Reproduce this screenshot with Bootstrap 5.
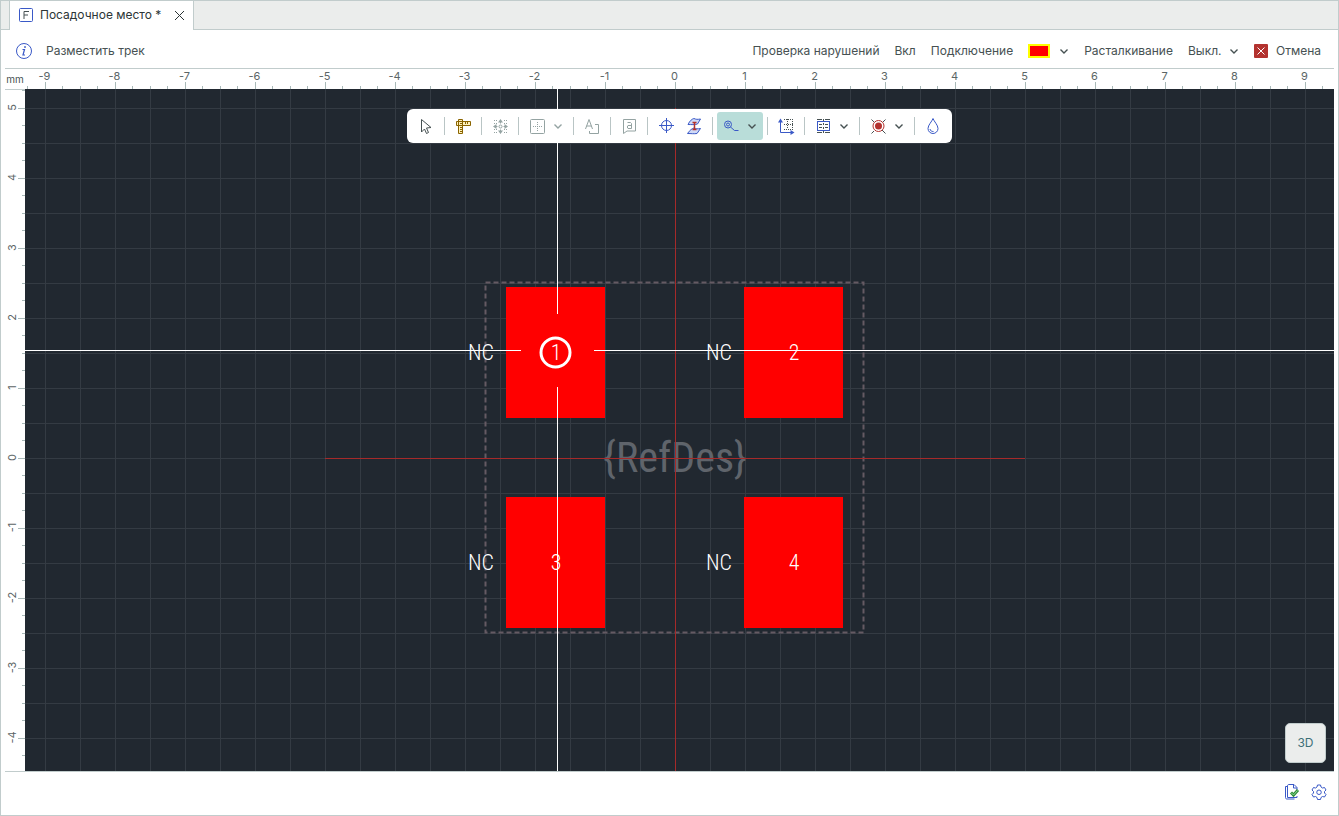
<!DOCTYPE html>
<html lang="ru">
<head>
<meta charset="utf-8">
<meta name="viewport" content="width=device-width, initial-scale=1">
<title>Посадочное место</title>
<link href="https://cdn.jsdelivr.net/npm/bootstrap@5.3.0/dist/css/bootstrap.min.css" rel="stylesheet">
<style>
  :root { --line: #c1cccc; --ink: #465152; --blue: #3a59c7; --board: #212830; }
  body { font: 12px/20px Inter, sans-serif; color: var(--ink); }
  button, select { font: inherit; color: inherit; background: none; border: 0; padding: 0; }
  svg { display: block; flex: none; }
  .window { height: 100vh; border: 1px solid var(--line); background: #fff; }
  .tabs { height: 29px; padding-left: 8px; background: #ebedec; box-shadow: inset 0 -1px var(--line); }
  .doc-tab { background: #fff; border: 1px solid var(--line); border-width: 0 1px; padding: 0 6px 2px 8px; gap: 6px; color: #2c3536; }
  .doc-title { width: 122px; margin-right: 3px; }
  .work { margin: 0 4px; }
  .options { height: 39px; padding: 3px 13px 0 10px; gap: 13px; border-bottom: 1px solid var(--line); }
  .options .state { gap: 15px; }
  .swatch { width: 22px; height: 14px; background: red; border: 2px solid #ff0; }
  .picker { gap: 9px; }
  .mode { appearance: none; width: 51px; background: url("data:image/svg+xml,%3Csvg xmlns='http://www.w3.org/2000/svg' width='10' height='10' fill='none' stroke='%23465152' stroke-width='1.4'%3E%3Cpath d='M1.5 3.5 5 7l3.500-3.500'/%3E%3C/svg%3E") no-repeat right center; }
  .editor { display: grid; grid-template: 20px minmax(0, 1fr) / 20px minmax(0, 1fr); }
  .unit { font-size: 10px; border-bottom: 1px solid var(--line); margin-bottom: -1px; z-index: 1; }
  .ruler { width: 100%; height: 100%; font-size: 11px; fill: #5b6566; stroke: none; }
  .ruler line { stroke: #a9b9b8; }
  .board { background: var(--board); }
  .board > svg { position: absolute; inset: 0; width: 100%; height: 100%; }
  .cad { font-family: "Roboto Condensed", "Liberation Sans Narrow", Roboto, sans-serif; font-weight: 300; font-size: 22px; fill: #fff; text-anchor: middle; }
  .refdes { font-size: 42px; font-weight: 400; fill: #5f646b; }
  .tools { top: 20px; left: 0; right: 0; width: fit-content; margin: 0 auto; height: 34px; padding: 0 5px; background: #fff; border-radius: 6px; }
  .tools button { height: 28px; width: 28px; padding-left: 4px; border-radius: 3px; display: flex; align-items: center; gap: 6px; }
  .tools button.wide { width: 46px; }
  .tools button.on { background: #b9ddd9; }
  .tools button:disabled { color: #94a3a2; }
  .tools .sep { width: 1px; height: 18px; margin: 0 4px; background: #b9c5c5; }
  .view3d { right: 8px; bottom: 8px; width: 41px; height: 40px; background: #ebedec; border: 1px solid var(--line); border-radius: 5px; color: #3c7078; }
  .status { height: 44px; border-top: 1px solid var(--line); padding: 0 5px 4px; gap: 8px; }
  .ico { fill: none; stroke: currentColor; }
  .blue { color: var(--blue); }
</style>
</head>
<body>
<svg width="0" height="0" class="position-absolute" aria-hidden="true">
  <symbol id="chev" viewBox="0 0 10 10"><path d="M1.500 3.500 5 7l3.500-3.500" fill="none" stroke="currentColor" stroke-width="1.400"/></symbol>
</svg>
<div class="window d-flex flex-column overflow-hidden">
  <nav class="tabs d-flex align-items-stretch" aria-label="Документы">
    <div class="doc-tab d-flex align-items-center">
      <svg class="ico blue" width="16" height="16"><rect x="1.500" y="1.500" width="13" height="13" rx="1"/><path d="M6 12V4.500h5M6 8h4" stroke="#465152"/></svg>
      <a href="#" class="doc-title text-reset text-decoration-none text-nowrap">Посадочное место *</a>
      <button type="button" aria-label="Закрыть"><svg class="ico" width="16" height="16"><path d="m4 4 9 9m0-9-9 9"/></svg></button>
    </div>
  </nav>
  <main class="work d-flex flex-column flex-grow-1">
    <header class="options d-flex align-items-center">
      <svg class="ico blue" width="18" height="18"><circle cx="9" cy="9" r="7.500"/><path d="M7.500 7.500h2l-1.500 5.500h2" stroke-width="1.200"/><circle cx="10" cy="5" r=".5" fill="currentColor"/></svg>
      <span class="text-nowrap">Разместить трек</span>
      <div class="state d-flex align-items-center ms-auto text-nowrap">
        <span>Проверка нарушений</span>
        <button type="button">Вкл</button>
        <span>Подключение</span>
        <button type="button" class="picker d-flex align-items-center" aria-label="Цвет слоя"><span class="swatch"></span><svg width="10" height="10"><use href="#chev"/></svg></button>
        <label for="mode">Расталкивание</label>
        <select id="mode" class="mode"><option>Выкл.</option><option>Вкл.</option></select>
        <button type="button" class="d-flex align-items-center gap-2"><svg width="14" height="14"><rect width="14" height="14" rx="1" fill="#b3322f"/><path d="m3.500 3.500 7 7m0-7-7 7" stroke="#fff"/></svg>Отмена</button>
      </div>
    </header>
    <section class="editor flex-grow-1">
      <div class="unit d-flex align-items-center justify-content-center">mm</div>
      <svg class="ruler" id="rulerX"></svg>
      <svg class="ruler" id="rulerY"></svg>
      <div class="board position-relative overflow-hidden" id="board">
        <svg>
          <defs><pattern id="grid" x="20" y="19" width="35" height="35" patternUnits="userSpaceOnUse"><path d="M.5 0V35M0 .5H35" stroke="#343b43"/></pattern></defs>
          <rect width="100%" height="100%" fill="url(#grid)"/>
          <rect x="460.500" y="193.500" width="378" height="350" fill="none" stroke="#655a63" stroke-width="2" stroke-dasharray="5 3"/>
          <g fill="red">
            <rect x="481" y="198" width="99" height="131"/><rect x="719" y="198" width="99" height="131"/>
            <rect x="481" y="408" width="99" height="131"/><rect x="719" y="408" width="99" height="131"/>
          </g>
          <text class="cad refdes" x="650" y="383">{RefDes}</text>
          <path d="M300 369.500h700M650.500 19v700" stroke="#a52a2a"/>
          <g class="cad">
            <text x="456" y="271">NC</text><text x="694" y="271">NC</text>
            <text x="456" y="481">NC</text><text x="694" y="481">NC</text>
            <text x="531" y="271">1</text><text x="769" y="271">2</text>
            <text x="531" y="481">3</text><text x="769" y="481">4</text>
          </g>
          <circle cx="530.500" cy="263.500" r="14.500" fill="none" stroke="#fff" stroke-width="3"/>
          <path d="M0 261.500H496M569 261.500H4000M532.500 0V225M532.500 298V4000" stroke="#fff"/>
        </svg>
        <div class="tools position-absolute d-flex align-items-center" role="toolbar">
          <button type="button" aria-label="Выбор"><svg class="ico" width="20" height="20"><path d="M5.500 3.500v12.500l3-3 2 4.500 2-1-2-4.500 4.500-.5z" stroke="#465152"/></svg></button>
          <span class="sep"></span>
          <button type="button" aria-label="Измерить"><svg class="ico" width="20" height="20"><g stroke="#8a6400"><path d="M3.500 5.500h14v4h-14zM5.500 3.500h4v14h-4z" fill="#fff2bd"/><path d="M12.500 6v2M14.500 6v2M7 11.500h2M7 13.500h2M7 15.500h2M7 7.500h2"/></g></svg></button>
          <span class="sep"></span>
          <button type="button" disabled aria-label="Сетка"><svg class="ico" width="20" height="20"><path d="M4 4.500h3M14 4.500h3M4 16.500h3M14 16.500h3M4 7.500h3M14 7.500h3M4 13.500h3M14 13.500h3" stroke-dasharray="1 1"/><path d="M10.500 5v2.500M10.500 13.500V16M5 10.500h2.500M13.500 10.500H16"/><path d="m8 6.500 2.500-3.500L13 6.500zM8 14.500l2.500 3.500 2.500-3.500zM6.500 8 3 10.500 6.500 13zM14.500 8l3.500 2.500-3.500 2.500z" fill="currentColor" stroke="none"/><circle cx="10.500" cy="10.500" r="1.500"/></svg></button>
          <span class="sep"></span>
          <button type="button" class="wide" disabled aria-label="Область"><svg class="ico" width="20" height="20"><rect x="3.500" y="3.500" width="14" height="14" rx="1"/><path d="M10.500 6v9M6 10.500h9" stroke-dasharray="1 1"/></svg><svg width="10" height="10"><use href="#chev"/></svg></button>
          <span class="sep"></span>
          <button type="button" disabled aria-label="Текст"><svg class="ico" width="20" height="20"><path d="M3.500 13 7 3.500 10.500 13M4.500 10h5M13 8.500h3.500v9h-9V15"/></svg></button>
          <span class="sep"></span>
          <button type="button" disabled aria-label="Комментарий"><svg class="ico" width="20" height="20"><path d="M4.500 3.500h12v11.500H8l-3.500 2.500zM8.500 6.500h3l1 1v5H9l-.5-.5v-2l.5-.5h3" stroke-linejoin="round"/></svg></button>
          <span class="sep"></span>
          <button type="button" class="blue" aria-label="Начало координат"><svg class="ico" width="20" height="20"><circle cx="10.500" cy="9.500" r="5"/><path d="M10.500 2v15M3 9.500h15"/></svg></button>
          <button type="button" class="blue" aria-label="Переходное отверстие"><svg class="ico" width="20" height="20"><path d="M4 8.500C6 4.500 8 3 10 2.500c2 1 3.500 1 6.500.5L13.500 8c-3 1-6 .5-9.500.5zM3.500 17.500C6 14 8 12.500 10 12c2 1 3.500 1 6.500.5l-3.500 5c-3 .5-6 0-9.500 0z" fill="#cfd9f7"/><path d="M10.500 6v8M8.500 6.500h4M8.500 13.500h4" stroke="#b3322f" stroke-width="1.500"/></svg></button>
          <span class="sep"></span>
          <button type="button" class="wide on" aria-label="Трек" aria-pressed="true"><svg class="ico blue" width="20" height="20"><circle cx="7" cy="8.500" r="3.500"/><circle cx="7" cy="8.500" r="1.500"/><path d="m9.500 11 4 3.500h4"/></svg><svg width="10" height="10"><use href="#chev"/></svg></button>
          <span class="sep"></span>
          <button type="button" class="blue" aria-label="Размеры"><svg class="ico" width="20" height="20"><path d="M4.500 5v11.500H16"/><path d="m4.500 2.500-2.500 4h5zM18.500 16.500l-4-2.500v5z" fill="currentColor" stroke="none"/><path d="M8 3.500h9M8 8.500h9M8 13.500h9M11.500 3v10M16.500 3v10" stroke="#465152" stroke-dasharray="1 1"/></svg></button>
          <span class="sep"></span>
          <button type="button" class="wide" aria-label="Компонент"><svg class="ico" width="20" height="20"><path d="M4 3.500h5M12 3.500h5M4 16.500h5M12 16.500h5M6 8.500h3M12 8.500h3M6 11.500h3M12 11.500h3M10.500 3v2M10.500 15v2M10.500 7v2M10.500 11v2"/><rect x="4.500" y="5.500" width="12" height="9" stroke="#3a59c7"/></svg><svg width="10" height="10"><use href="#chev"/></svg></button>
          <span class="sep"></span>
          <button type="button" class="wide" aria-label="Контактная площадка"><svg class="ico" width="20" height="20"><path d="m3.500 3.500 2.500 2.500M14 14l3.500 3.500M17.500 3.500 15 6M6 15l-2.500 2.500"/><circle cx="10.500" cy="10" r="5.500" stroke="#b3322f"/><circle cx="10.500" cy="10" r="3.500" fill="#b3322f" stroke="none"/></svg><svg width="10" height="10"><use href="#chev"/></svg></button>
          <span class="sep"></span>
          <button type="button" class="blue" aria-label="Заливка"><svg class="ico" width="20" height="20"><path d="M10 2.500c-1 3-5 6.500-5 10a5 5 0 0 0 10 0c0-3.500-4-7-5-10zM7 13c.5 2 1.500 2.500 3.500 2.500"/></svg></button>
        </div>
        <button type="button" class="view3d position-absolute">3D</button>
      </div>
    </section>
    <footer class="status d-flex align-items-center justify-content-end blue">
      <button type="button" aria-label="Проверка проекта"><svg class="ico blue" width="18" height="18"><path d="M6 1.500h5l3 3V7M14 13v1.500H4.500V3c0-1 .5-1.500 1.500-1.500M10.500 1.500V5H14M4.500 3.500h-2v11c0 1 .5 1.500 1.500 1.500h7.500"/><path d="m8 9.500 2.500 2.500L15 7" stroke="#2f8f3a" stroke-width="3"/><path d="m8.500 10 2 2L14.500 7.500" stroke="#8fd694"/></svg></button>
      <button type="button" aria-label="Настройки"><svg class="ico blue" width="20" height="18"><path d="M8.500 2h3l.5 2 1.500 1 2-.5 1.500 2.500-1.500 1.500v1.500l1.500 1.500-1.500 2.500-2-.5-1.500 1-.5 2h-3L8 14.500l-1.500-1-2 .5L3 11.500 4.500 10V8.500L3 7l1.500-2.500 2 .5L8 4z" stroke-linejoin="round"/><circle cx="10" cy="9.250" r="2.250"/></svg></button>
    </footer>
  </main>
</div>
<script src="https://cdn.jsdelivr.net/npm/bootstrap@5.3.0/dist/js/bootstrap.bundle.min.js"></script>
<script>
  // One millimetre is 70 px; ticks fall every quarter millimetre.
  const mm = 70, originX = 650, originY = 369;
  const board = document.getElementById('board');
  const line = (x1, y1, x2, y2) => `<line x1="${x1}" y1="${y1}" x2="${x2}" y2="${y2}"/>`;

  function ticks(origin, length, draw) {
    let out = '';
    const first = Math.ceil(-origin * 4 / mm), last = Math.floor((length - origin) * 4 / mm);
    for (let q = first; q <= last; q++) {
      const at = Math.floor(origin + q * mm / 4) + .5;
      const labelled = q % 4 === 0 && at > 10 && at < length - 10;
      out += draw(at, q % 4 === 0 ? 7 : 3, labelled ? q / 4 : null);
    }
    return out;
  }

  function drawRulers() {
    document.getElementById('rulerX').innerHTML = ticks(originX, board.clientWidth, (at, len, n) =>
      line(at, 20 - len, at, 20) + (n === null ? '' : `<text x="${at - 1}" y="11" text-anchor="middle">${n}</text>`));
    document.getElementById('rulerY').innerHTML = ticks(originY, board.clientHeight, (at, len, n) =>
      line(20 - len, at, 20, at) + (n === null ? '' : `<text transform="translate(11 ${at - 1}) rotate(-90)" text-anchor="middle">${n === 0 ? 0 : -n}</text>`));
  }

  drawRulers();
  addEventListener('resize', drawRulers);
</script>
</body>
</html>
